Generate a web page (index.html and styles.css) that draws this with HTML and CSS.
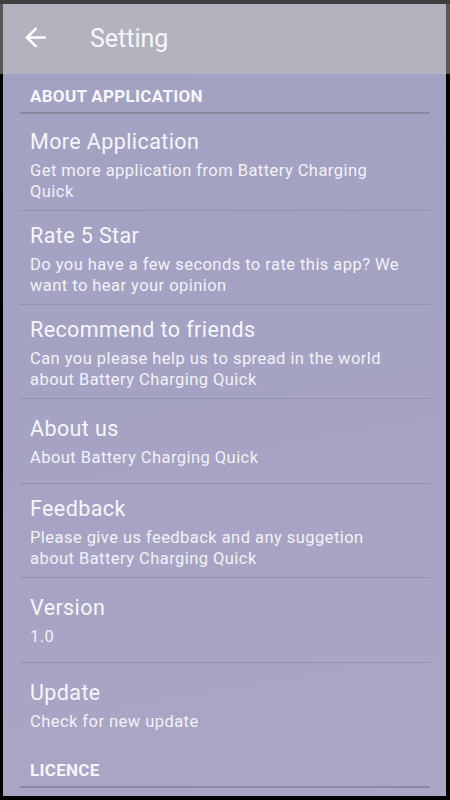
FILE: index.html
```html
<!DOCTYPE html>
<html lang="en">
<head>
    <meta charset="UTF-8">
    <meta name="viewport" content="width=device-width, initial-scale=1.0">
    <title>Setting</title>
    <link rel="stylesheet" href="styles.css">
</head>
<body>
    <div class="topframe">
        <div class="appbar">
            <svg class="back" viewBox="0 0 24 24" width="31" height="31">
                <path d="M20 11H7.83l5.59-5.59L12 4l-8 8 8 8 1.41-1.41L7.83 13H20v-2z" fill="#fff"/>
            </svg>
            <span class="title">Setting</span>
        </div>
    </div>

    <div class="screen">
        <div class="list">
            <div class="category">ABOUT APPLICATION</div>

            <div class="pref first">
                <div class="pref-title">More Application</div>
                <div class="pref-summary">Get more application from Battery Charging Quick</div>
            </div>
            <div class="pref">
                <div class="pref-title">Rate 5 Star</div>
                <div class="pref-summary">Do you have a few seconds to rate this app? We want to hear your opinion</div>
            </div>
            <div class="pref">
                <div class="pref-title">Recommend to friends</div>
                <div class="pref-summary">Can you please help us to spread in the world about Battery Charging Quick</div>
            </div>
            <div class="pref single">
                <div class="pref-title">About us</div>
                <div class="pref-summary">About Battery Charging Quick</div>
            </div>
            <div class="pref">
                <div class="pref-title">Feedback</div>
                <div class="pref-summary">Please give us feedback and any suggetion about Battery Charging Quick</div>
            </div>
            <div class="pref single">
                <div class="pref-title">Version</div>
                <div class="pref-summary">1.0</div>
            </div>
            <div class="pref single last">
                <div class="pref-title">Update</div>
                <div class="pref-summary">Check for new update</div>
            </div>

            <div class="category">LICENCE</div>
        </div>
    </div>
</body>
</html>
```

FILE: styles.css
```css
body {
    margin: 0;
    height: 800px;
    overflow: hidden;
    background-color: #000;
    font-family: Roboto, "Liberation Sans", sans-serif;
    color: #f6f6f9;
}
.topframe {
    border-top: 4px solid #3e3e40;
    background-color: #58585a;
    padding: 0 4px 0 3px;
}
.appbar {
    height: 70px;
    background-color: #b3b2be;
    display: flex;
    align-items: center;
    padding: 0 0 2px 17px;
    box-sizing: border-box;
}
.back {
    display: block;
    margin-top: -1px;
}
.title {
    margin-left: 39px;
    font-size: 25px;
    color: #f7f7f9;
}
.screen {
    margin: 0 4px 0 3px;
    height: 722px;
    background: linear-gradient(170deg, #a2a2c3 0%, #a6a3c4 55%, #aca5c5 100%);
    overflow: hidden;
}
.list {
    margin: 0 16px 0 17px;
}
.category {
    height: 40px;
    box-sizing: border-box;
    padding: 12px 10px 0;
    font-size: 17px;
    line-height: 20px;
    font-weight: bold;
    letter-spacing: 0.3px;
    border-bottom: 2px solid #8a899f;
}
.pref {
    padding: 12px 20px 8px 10px;
    border-bottom: 1px solid #9392b0;
}
.pref.first {
    padding-top: 15px;
}
.pref.single {
    padding: 17px 20px 15px 10px;
}
.pref.last {
    border-bottom: none;
    padding-bottom: 16px;
}
.pref-title {
    font-size: 21.5px;
    line-height: 26px;
    letter-spacing: 0.4px;
}
.pref-summary {
    margin-top: 5px;
    font-size: 16.5px;
    line-height: 21px;
    letter-spacing: 0.45px;
    color: #f2f2f6;
}
```
